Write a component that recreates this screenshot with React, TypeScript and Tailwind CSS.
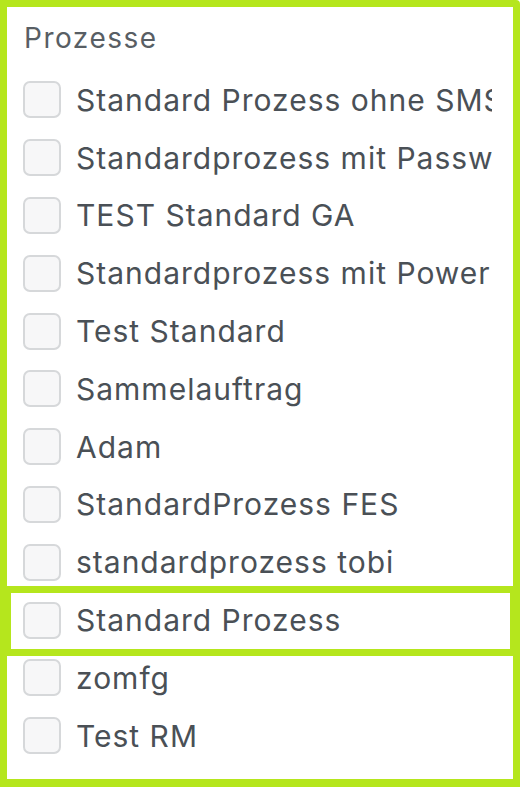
import React from "react";

const items = [
  "Standard Prozess ohne SMS",
  "Standardprozess mit Passwort",
  "TEST Standard GA",
  "Standardprozess mit PowerPoint",
  "Test Standard",
  "Sammelauftrag",
  "Adam",
  "StandardProzess FES",
  "standardprozess tobi",
  "Standard Prozess",
  "zomfg",
  "Test RM",
];

export default function App() {
  return (
    <div
      className="relative w-[520px] h-[787px] overflow-hidden bg-white"
      style={{ fontFamily: "Inter, 'Noto Sans', sans-serif" }}
    >
      <div className="pt-[13px]">
        <div className="h-[50px] leading-[50px] pl-[24px] text-[28px] tracking-[1.5px] text-[#585e64]">
          Prozesse
        </div>
        <div className="mt-[8px] flex flex-col">
          {items.map((label) => (
            <div
              key={label}
              className="h-[57.8px] flex items-center pl-[23px] w-[492px] overflow-hidden"
            >
              <span className="shrink-0 w-[38px] h-[37px] rounded-[7px] border-2 border-[#d6d8da] bg-[#f7f7f8]" />
              <span className="ml-[15px] whitespace-nowrap text-[30px] leading-none tracking-[1px] text-[#4a5056]">
                {label}
              </span>
            </div>
          ))}
        </div>
      </div>

      <div className="pointer-events-none absolute left-0 top-0 w-[520px] h-[593px] border-[7px] border-[#b5e61d] rounded-tr-[4px]" />
      <div className="pointer-events-none absolute left-0 top-[586px] w-[520px] h-[70px] border-[#b5e61d] border-t-[7px] border-b-[7px] border-l-[11px] border-r-[10px]" />
      <div className="pointer-events-none absolute left-0 top-[649px] w-[520px] h-[138px] border-[#b5e61d] border-t-[7px] border-l-[7px] border-r-[7px] border-b-[8px]" />
    </div>
  );
}
